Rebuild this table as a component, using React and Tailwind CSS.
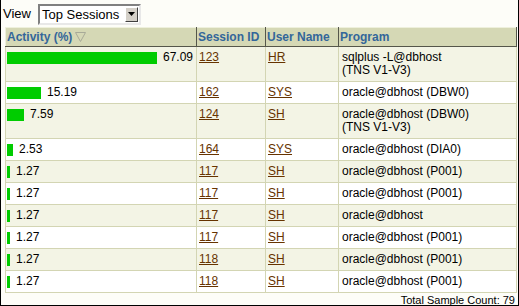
import React from 'react';

const rows = [
  { pct: 67.09, sid: '123', user: 'HR', prog: ['sqlplus -L@dbhost', '(TNS V1-V3)'] },
  { pct: 15.19, sid: '162', user: 'SYS', prog: ['oracle@dbhost (DBW0)'] },
  { pct: 7.59, sid: '124', user: 'SH', prog: ['oracle@dbhost (DBW0)', '(TNS V1-V3)'] },
  { pct: 2.53, sid: '164', user: 'SYS', prog: ['oracle@dbhost (DIA0)'] },
  { pct: 1.27, sid: '117', user: 'SH', prog: ['oracle@dbhost (P001)'] },
  { pct: 1.27, sid: '117', user: 'SH', prog: ['oracle@dbhost (P001)'] },
  { pct: 1.27, sid: '117', user: 'SH', prog: ['oracle@dbhost'] },
  { pct: 1.27, sid: '117', user: 'SH', prog: ['oracle@dbhost (P001)'] },
  { pct: 1.27, sid: '118', user: 'SH', prog: ['oracle@dbhost (P001)'] },
  { pct: 1.27, sid: '118', user: 'SH', prog: ['oracle@dbhost (P001)'] },
];

const Th = ({ children, w }) => (
  <th
    className={`${w} h-[19px] bg-[#d5d8b5] border-t border-l border-t-[#eef0dc] border-l-[#eef0dc] border-r border-b border-r-[#55564a] border-b-[#55564a] text-left align-middle px-[1px] font-bold text-[12px] leading-[14px] text-[#33669a]`}
  >
    {children}
  </th>
);

const Td = ({ children, className = '' }) => (
  <td className={`border border-[#d3d5b3] align-top pr-[2px] pt-[4px] pb-[4px] leading-[13px] ${className}`}>
    {children}
  </td>
);

export default function App() {
  return (
    <div
      className="w-[519px] h-[306px] bg-[#fdfdf8] border-l border-r border-b border-black text-[12px] text-black overflow-hidden"
      style={{ fontFamily: '"Liberation Sans", Arial, sans-serif' }}
    >
      <div className="flex items-center h-[27px] pl-[2px] pt-[1px]">
        <span className="text-[13px] mr-[7px]">View</span>
        <div className="flex items-center w-[103px] h-[21px] bg-white border-2 border-t-[#808080] border-l-[#808080] border-r-[#e8e8e8] border-b-[#e8e8e8]">
          <span className="flex-1 pl-[2px] text-[13px] leading-[15px]">Top Sessions</span>
          <div className="w-[13px] h-[15px] mr-[1px] bg-[#d4d0c8] border border-t-white border-l-white border-r-[#404040] border-b-[#404040] flex items-center justify-center">
            <svg width="7" height="4" viewBox="0 0 7 4">
              <path d="M0 0h7L3.5 4z" fill="#000" />
            </svg>
          </div>
        </div>
      </div>

      <table className="ml-[4px] w-[511px] border-collapse table-fixed">
        <thead>
          <tr>
            <Th w="w-[191px]">
              Activity (%)
              <svg className="inline-block ml-[3px] align-[-1px]" width="11" height="10" viewBox="0 0 11 10">
                <path d="M0.5 0.5h10L5.5 9.5z" fill="none" stroke="#a8aa98" strokeWidth="1" />
              </svg>
            </Th>
            <Th w="w-[69px]">Session ID</Th>
            <Th w="w-[73px]">User Name</Th>
            <Th w="w-[178px]">Program</Th>
          </tr>
        </thead>
        <tbody>
          {rows.map((r, i) => (
            <tr key={i} className={i % 2 === 0 ? 'bg-[#f3f4e5]' : 'bg-white'}>
              <Td className="pl-[1px]">
                <div className="flex items-center gap-[6px]">
                  <div className="h-[12px] bg-[#00cc00]" style={{ width: Math.max(3, Math.round(r.pct * 2.24)) }} />
                  <span>{r.pct.toFixed(2)}</span>
                </div>
              </Td>
              <Td className="pl-[2px]">
                <a className="text-[#663300] underline">{r.sid}</a>
              </Td>
              <Td className="pl-[2px]">
                <a className="text-[#663300] underline">{r.user}</a>
              </Td>
              <Td className="pl-[3px]">
                {r.prog.map((p, j) => (
                  <div key={j}>{p}</div>
                ))}
              </Td>
            </tr>
          ))}
        </tbody>
      </table>

      <div className="text-right text-[11px] leading-[13px] pr-[3px] pt-[1px]">Total Sample Count: 79</div>
    </div>
  );
}
